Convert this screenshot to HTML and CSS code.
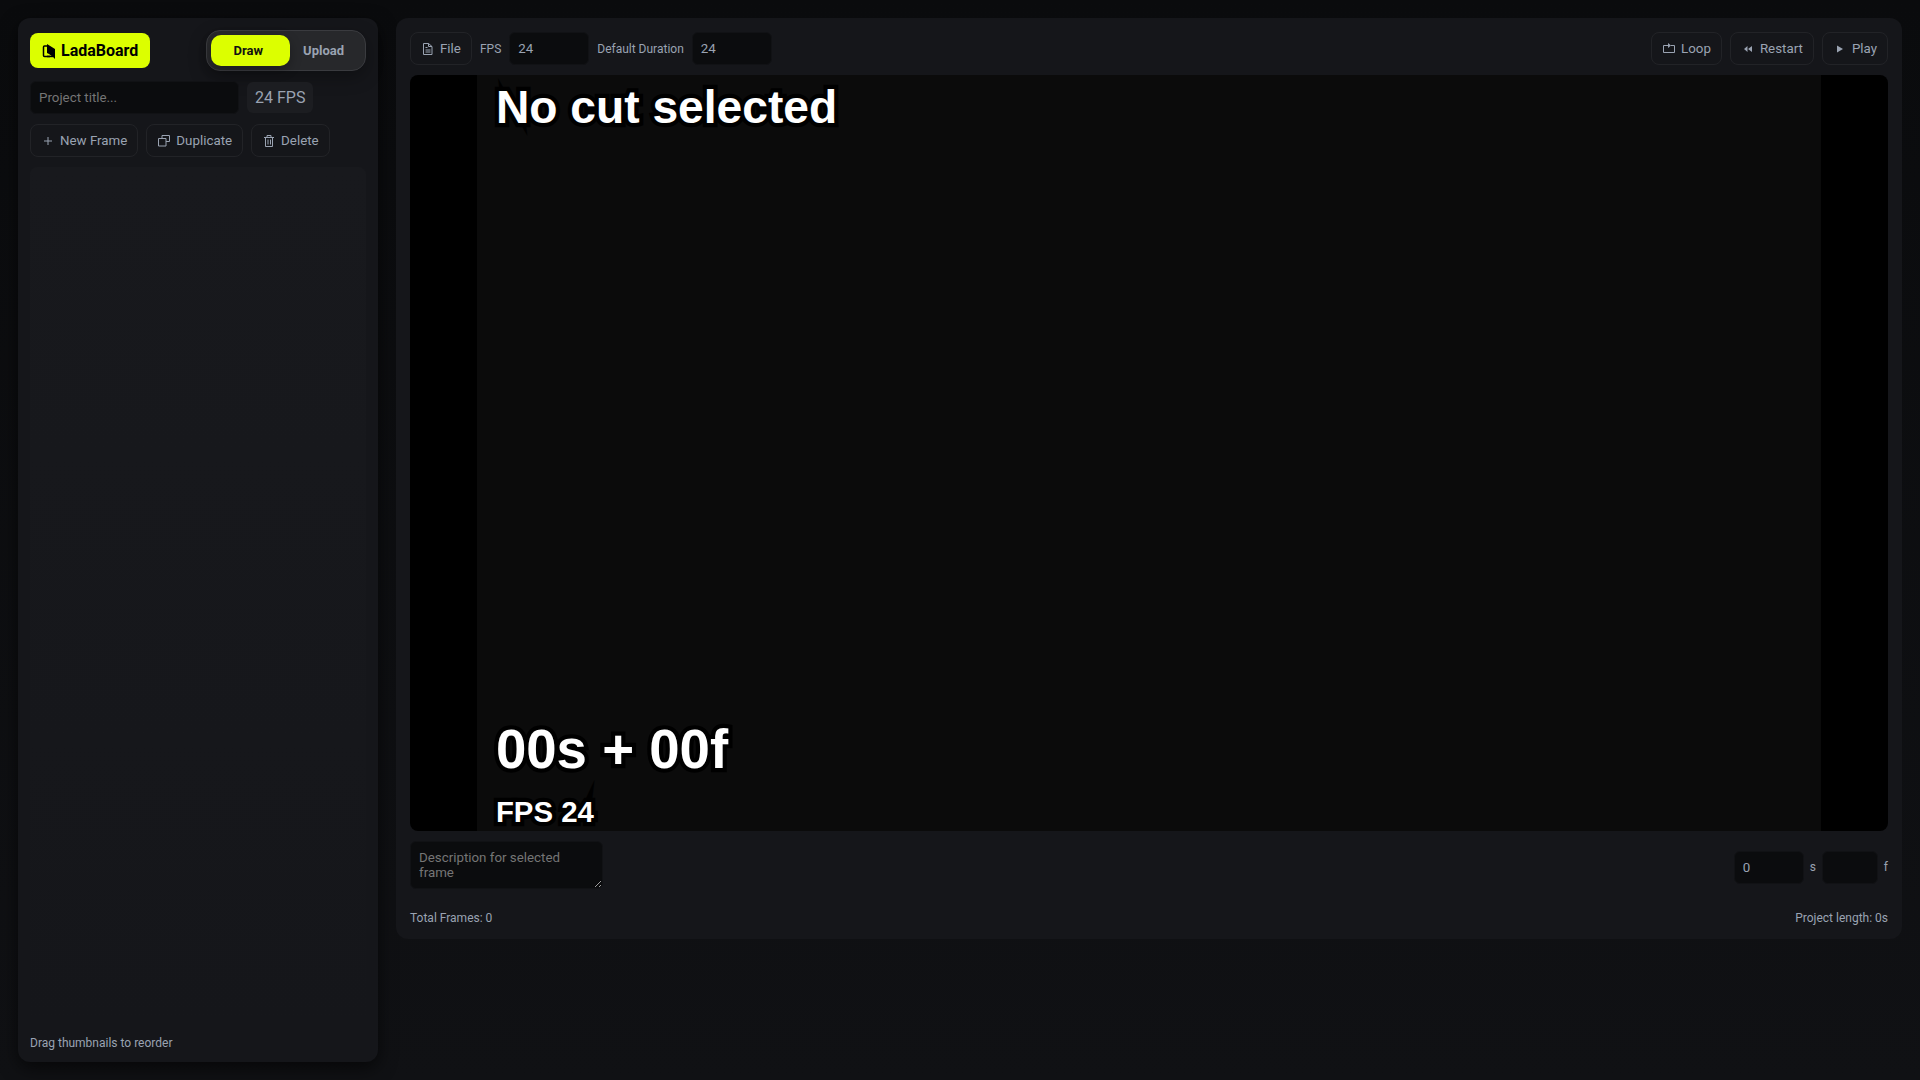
FILE: index.html
```html
<!DOCTYPE html>
<html lang="en">
<head>
  <meta charset="UTF-8" />
  <meta name="viewport" content="width=device-width, initial-scale=1" />
  <title>LadaBoard</title>
  <link rel="stylesheet" href="styles.css">
</head>
<body>
  <div class="app">
    <!-- Sidebar -->
    <aside class="sidebar">
      <div class="brand-row">
        <h1 class="brand">
          <svg class="brand-icon" viewBox="0 0 14 16" aria-hidden="true">
            <path d="M6 3H2.500a1 1 0 0 0-1 1v8.500a1 1 0 0 0 1 1H8" fill="none" stroke="currentColor" stroke-width="1.500" />
            <path d="M5 1l8 5v10l-2-2-4-3-2-1z" />
            <path d="M5 12.700h6v1.500H5z" />
          </svg>
          LadaBoard
        </h1>
        <div class="mode-toggle">
          <button class="mode active">Draw</button>
          <button class="mode">Upload</button>
        </div>
      </div>

      <div class="row">
        <input type="text" class="field title-input" placeholder="Project title..." aria-label="Project title" />
        <div class="fps-pill">24 FPS</div>
      </div>

      <div class="row">
        <button class="btn">
          <svg class="icon" viewBox="0 0 14 14" aria-hidden="true"><path d="M7 3v8M3 7h8" /></svg>
          New Frame
        </button>
        <button class="btn">
          <svg class="icon" viewBox="0 0 14 14" aria-hidden="true"><path d="M5 4.500v-3h7.500v6H9M1.500 4.500H9v7.500H1.500z" /></svg>
          Duplicate
        </button>
        <button class="btn">
          <svg class="icon" viewBox="0 0 14 14" aria-hidden="true"><path d="M2 3.500h10M5 3.500v-2h4v2M3.500 3.500v9h7v-9M6 5.500v5M8.500 5.500v5" /></svg>
          Delete
        </button>
      </div>

      <div class="thumbs"></div>
      <div class="small">Drag thumbnails to reorder</div>
    </aside>

    <!-- Player -->
    <main class="main">
      <div class="toolbar">
        <div class="row">
          <button class="btn">
            <svg class="icon" viewBox="0 0 14 14" aria-hidden="true"><path d="M2.500 1.500h5l3.500 3v8H2.500zM7.500 1.500v3H11M4.500 5.500h2M4.500 8h5M4.500 10h5" /></svg>
            File
          </button>
          <label class="small" for="fps">FPS</label>
          <input type="text" inputmode="numeric" class="field number" id="fps" value="24" />
          <label class="small" for="defaultDuration">Default Duration</label>
          <input type="text" inputmode="numeric" class="field number" id="defaultDuration" value="24" />
        </div>
        <div class="row">
          <button class="btn">
            <svg class="icon" viewBox="0 0 14 14" aria-hidden="true"><path d="M4 3.500H1.500v7h11v-7H9" /><path class="solid" d="M4 3h2V1l3 2.500L6 6V4H4z" /></svg>
            Loop
          </button>
          <button class="btn">
            <svg class="icon" viewBox="0 0 14 14" aria-hidden="true"><path class="solid" d="M6.500 4v6L3 7zM11 4v6L7 7z" /></svg>
            Restart
          </button>
          <button class="btn">
            <svg class="icon" viewBox="0 0 14 14" aria-hidden="true"><path class="solid" d="M4 3.500v7L10 7z" /></svg>
            Play
          </button>
        </div>
      </div>

      <div class="viewer">
        <svg class="stage" viewBox="0 0 1280 720">
          <rect class="stage-bg" width="1280" height="720" />
          <text class="stage-text" x="18" y="46" font-size="44">No cut selected</text>
          <text class="stage-text" x="18" y="660" font-size="52">00s + 00f</text>
          <text class="stage-text" x="18" y="711" font-size="28">FPS 24</text>
        </svg>
      </div>

      <div class="details">
        <textarea class="field desc" placeholder="Description for selected frame" aria-label="Description for selected frame"></textarea>
        <div class="row duration">
          <input type="text" inputmode="numeric" class="field seconds" id="seconds" value="0" />
          <label class="small" for="seconds">s</label>
          <input type="text" inputmode="numeric" class="field frames" id="frames" />
          <label class="small" for="frames">f</label>
        </div>
      </div>

      <div class="status small">
        <div>Total Frames: 0</div>
        <div>Project length: 0s</div>
      </div>
    </main>
  </div>
</body>
</html>
```
FILE: styles.css
```css
:root {
  --accent: #dcff00;
  --panel: #15161a;
  --field: #0b0c0e;
  --muted: #9aa3b2;
  --line: #222327;
}

* {
  box-sizing: border-box;
}

body {
  margin: 0;
  font-family: Roboto, sans-serif;
  color: var(--muted);
  background: linear-gradient(180deg, #0a0b0d, #101114);
}

button,
input,
textarea {
  font-family: Roboto, sans-serif;
}

.app {
  display: flex;
  align-items: flex-start;
  gap: 18px;
  min-height: 100vh;
  padding: 18px;
}

.sidebar {
  flex: 0 0 360px;
  align-self: stretch;
  display: flex;
  flex-direction: column;
  gap: 10px;
  padding: 12px;
  border-radius: 12px;
  background: var(--panel);
  box-shadow: 0 6px 18px rgba(0, 0, 0, 0.6);
}

.brand-row,
.toolbar,
.details,
.status {
  display: flex;
  align-items: center;
  justify-content: space-between;
}

.brand {
  display: flex;
  align-items: center;
  gap: 5px;
  margin: 0;
  padding: 8px 12px;
  border-radius: 8px;
  background: var(--accent);
  color: #000;
  font-size: 16px;
  font-weight: 700;
  line-height: 19px;
}

.brand-icon {
  width: 14px;
  height: 16px;
}

.mode-toggle {
  display: flex;
  padding: 4px;
  border: 1px solid #3a3b3f;
  border-radius: 14px;
  background: #27282b;
  box-shadow: 0 6px 18px rgba(0, 0, 0, 0.3);
}

.mode {
  height: 31px;
  padding: 0 17px 0 13px;
  border: 0;
  border-radius: 10px;
  background: transparent;
  color: var(--muted);
  font-size: 13px;
  font-weight: 700;
  cursor: pointer;
}

.mode.active {
  padding: 0 27px 0 23px;
  background: var(--accent);
  color: #111;
  box-shadow: 0 4px 12px rgba(0, 0, 0, 0.3);
}

.row {
  display: flex;
  align-items: center;
  gap: 8px;
}

.field {
  height: 33px;
  padding: 8px;
  border: 1px solid #111215;
  border-radius: 6px;
  background: var(--field);
  color: var(--muted);
}

.field::placeholder {
  color: #757575;
}

.title-input {
  width: 209px;
}

.fps-pill {
  padding: 6px 8px;
  border-radius: 6px;
  background: #1c1d21;
  font-size: 16px;
  line-height: 19px;
}

.btn {
  display: flex;
  align-items: center;
  gap: 5px;
  height: 33px;
  padding: 0 10px;
  border: 1px solid var(--line);
  border-radius: 8px;
  background: transparent;
  color: var(--muted);
  cursor: pointer;
}

.icon {
  width: 14px;
  height: 14px;
  fill: none;
  stroke: currentColor;
}

.icon .solid {
  fill: currentColor;
  stroke: none;
}

.thumbs {
  flex: 1;
  border-radius: 8px;
  background: linear-gradient(180deg, #18191d, #15161a);
}

.small {
  font-size: 12px;
  line-height: 14px;
}

.main {
  flex: 1;
  min-width: 0;
  display: flex;
  flex-direction: column;
  gap: 10px;
  padding: 14px;
  border-radius: 12px;
  background: var(--panel);
}

.number {
  width: 80px;
}

.viewer {
  height: 70vh;
  border-radius: 8px;
  background: #000;
  overflow: hidden;
}

.stage {
  display: block;
  width: 100%;
  height: 100%;
}

.stage-bg {
  fill: #0b0b0b;
}

.stage-text {
  fill: #fff;
  stroke: #000;
  stroke-width: 8px;
  stroke-miterlimit: 10;
  paint-order: stroke;
  font-family: "Liberation Sans", sans-serif;
  font-weight: 700;
}

.details {
  min-height: 52px;
}

.desc {
  align-self: flex-start;
  width: 193px;
  height: 48px;
}

.duration {
  gap: 6px;
}

.seconds {
  width: 70px;
}

.frames {
  width: 56px;
}

.status {
  padding-top: 8px;
}
```
